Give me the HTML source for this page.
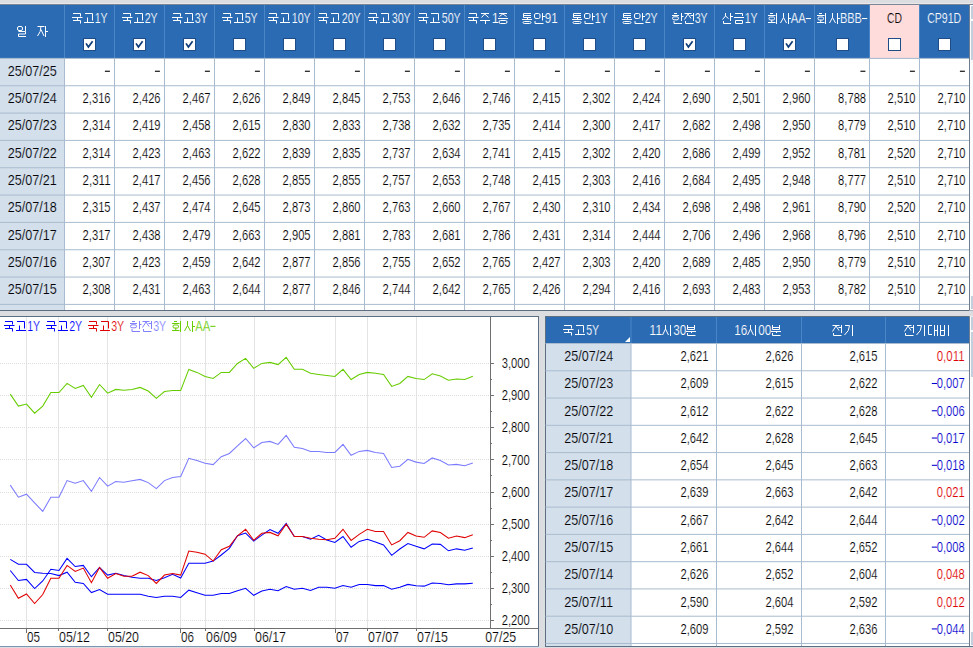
<!DOCTYPE html>
<html><head><meta charset="utf-8"><style>
html,body{margin:0;padding:0;width:973px;height:648px;overflow:hidden;background:#dcdde0}
svg{display:block}
text{font-family:"Liberation Sans",sans-serif}
</style></head><body>
<svg width="973" height="648" viewBox="0 0 973 648" font-family="Liberation Sans, sans-serif">
<rect x="0.00" y="0.00" width="973.00" height="648.00" fill="#dcdde0" />
<rect x="0.00" y="3.00" width="973.00" height="1.00" fill="#e9e9eb" />
<rect x="0.00" y="4.00" width="973.00" height="1.00" fill="#7a8696" />
<rect x="0.00" y="58.40" width="969.00" height="252.10" fill="#ffffff" />
<rect x="0.00" y="58.40" width="64.00" height="252.10" fill="#d3dfea" />
<rect x="0.00" y="5.00" width="969.00" height="53.40" fill="#2b6bb4" />
<rect x="869.00" y="5.00" width="50.00" height="53.40" fill="#ffdcdc" />
<rect x="64.00" y="5.00" width="1.00" height="53.40" fill="#4a86c6" />
<rect x="114.00" y="5.00" width="1.00" height="53.40" fill="#4a86c6" />
<rect x="164.00" y="5.00" width="1.00" height="53.40" fill="#4a86c6" />
<rect x="214.00" y="5.00" width="1.00" height="53.40" fill="#4a86c6" />
<rect x="264.00" y="5.00" width="1.00" height="53.40" fill="#4a86c6" />
<rect x="314.00" y="5.00" width="1.00" height="53.40" fill="#4a86c6" />
<rect x="364.00" y="5.00" width="1.00" height="53.40" fill="#4a86c6" />
<rect x="414.00" y="5.00" width="1.00" height="53.40" fill="#4a86c6" />
<rect x="464.00" y="5.00" width="1.00" height="53.40" fill="#4a86c6" />
<rect x="514.00" y="5.00" width="1.00" height="53.40" fill="#4a86c6" />
<rect x="564.00" y="5.00" width="1.00" height="53.40" fill="#4a86c6" />
<rect x="614.00" y="5.00" width="1.00" height="53.40" fill="#4a86c6" />
<rect x="664.00" y="5.00" width="1.00" height="53.40" fill="#4a86c6" />
<rect x="714.00" y="5.00" width="1.00" height="53.40" fill="#4a86c6" />
<rect x="764.00" y="5.00" width="1.00" height="53.40" fill="#4a86c6" />
<rect x="814.00" y="5.00" width="1.00" height="53.40" fill="#4a86c6" />
<rect x="869.00" y="5.00" width="1.00" height="53.40" fill="#4a86c6" />
<rect x="919.00" y="5.00" width="1.00" height="53.40" fill="#4a86c6" />
<rect x="0.00" y="57.90" width="969.00" height="1.00" fill="#a9bccf" />
<rect x="0.00" y="85.23" width="969.00" height="1.00" fill="#a9bccf" />
<rect x="0.00" y="112.57" width="969.00" height="1.00" fill="#a9bccf" />
<rect x="0.00" y="139.90" width="969.00" height="1.00" fill="#a9bccf" />
<rect x="0.00" y="167.23" width="969.00" height="1.00" fill="#a9bccf" />
<rect x="0.00" y="194.56" width="969.00" height="1.00" fill="#a9bccf" />
<rect x="0.00" y="221.90" width="969.00" height="1.00" fill="#a9bccf" />
<rect x="0.00" y="249.23" width="969.00" height="1.00" fill="#a9bccf" />
<rect x="0.00" y="276.56" width="969.00" height="1.00" fill="#a9bccf" />
<rect x="0.00" y="303.90" width="969.00" height="1.00" fill="#a9bccf" />
<rect x="64.00" y="58.40" width="1.00" height="252.10" fill="#a9bccf" />
<rect x="114.00" y="58.40" width="1.00" height="252.10" fill="#a9bccf" />
<rect x="164.00" y="58.40" width="1.00" height="252.10" fill="#a9bccf" />
<rect x="214.00" y="58.40" width="1.00" height="252.10" fill="#a9bccf" />
<rect x="264.00" y="58.40" width="1.00" height="252.10" fill="#a9bccf" />
<rect x="314.00" y="58.40" width="1.00" height="252.10" fill="#a9bccf" />
<rect x="364.00" y="58.40" width="1.00" height="252.10" fill="#a9bccf" />
<rect x="414.00" y="58.40" width="1.00" height="252.10" fill="#a9bccf" />
<rect x="464.00" y="58.40" width="1.00" height="252.10" fill="#a9bccf" />
<rect x="514.00" y="58.40" width="1.00" height="252.10" fill="#a9bccf" />
<rect x="564.00" y="58.40" width="1.00" height="252.10" fill="#a9bccf" />
<rect x="614.00" y="58.40" width="1.00" height="252.10" fill="#a9bccf" />
<rect x="664.00" y="58.40" width="1.00" height="252.10" fill="#a9bccf" />
<rect x="714.00" y="58.40" width="1.00" height="252.10" fill="#a9bccf" />
<rect x="764.00" y="58.40" width="1.00" height="252.10" fill="#a9bccf" />
<rect x="814.00" y="58.40" width="1.00" height="252.10" fill="#a9bccf" />
<rect x="869.00" y="58.40" width="1.00" height="252.10" fill="#a9bccf" />
<rect x="919.00" y="58.40" width="1.00" height="252.10" fill="#a9bccf" />
<rect x="969.00" y="58.40" width="1.00" height="252.10" fill="#a9bccf" />
<rect x="0.00" y="310.00" width="973.00" height="1.00" fill="#5f6f82" />
<path transform="translate(72,13) scale(1.0,1.0)" d="M1,0.5H8.5V3.5 M0,4.5H10.5 M5.5,4.5V7.5 M1,7.5H8.5V10.5" fill="none" stroke="#ffffff" stroke-width="1.00"/>
<path transform="translate(84,13) scale(1.0,1.0)" d="M1,0.5H8.5V7.5 M3.5,4.5V9.5 M0,9.5H10" fill="none" stroke="#ffffff" stroke-width="1.00"/>
<text x="94.70" y="23.40" font-size="14" fill="#ffffff" stroke="#2b6bb4" stroke-width="0.18" textLength="13.00" lengthAdjust="spacingAndGlyphs">1Y</text>
<rect x="83.00" y="38.00" width="13.00" height="13.00" fill="#1d4c86" />
<rect x="84.00" y="39.00" width="11.00" height="11.00" fill="#ffffff" />
<path d="M86,43.4 L88.4,47.0 L92.6,41.2" fill="none" stroke="#0d3b78" stroke-width="1.7"/>
<path transform="translate(122,13) scale(1.0,1.0)" d="M1,0.5H8.5V3.5 M0,4.5H10.5 M5.5,4.5V7.5 M1,7.5H8.5V10.5" fill="none" stroke="#ffffff" stroke-width="1.00"/>
<path transform="translate(134,13) scale(1.0,1.0)" d="M1,0.5H8.5V7.5 M3.5,4.5V9.5 M0,9.5H10" fill="none" stroke="#ffffff" stroke-width="1.00"/>
<text x="144.70" y="23.40" font-size="14" fill="#ffffff" stroke="#2b6bb4" stroke-width="0.18" textLength="13.00" lengthAdjust="spacingAndGlyphs">2Y</text>
<rect x="133.00" y="38.00" width="13.00" height="13.00" fill="#1d4c86" />
<rect x="134.00" y="39.00" width="11.00" height="11.00" fill="#ffffff" />
<path d="M136,43.4 L138.4,47.0 L142.6,41.2" fill="none" stroke="#0d3b78" stroke-width="1.7"/>
<path transform="translate(172,13) scale(1.0,1.0)" d="M1,0.5H8.5V3.5 M0,4.5H10.5 M5.5,4.5V7.5 M1,7.5H8.5V10.5" fill="none" stroke="#ffffff" stroke-width="1.00"/>
<path transform="translate(184,13) scale(1.0,1.0)" d="M1,0.5H8.5V7.5 M3.5,4.5V9.5 M0,9.5H10" fill="none" stroke="#ffffff" stroke-width="1.00"/>
<text x="194.70" y="23.40" font-size="14" fill="#ffffff" stroke="#2b6bb4" stroke-width="0.18" textLength="13.00" lengthAdjust="spacingAndGlyphs">3Y</text>
<rect x="183.00" y="38.00" width="13.00" height="13.00" fill="#1d4c86" />
<rect x="184.00" y="39.00" width="11.00" height="11.00" fill="#ffffff" />
<path d="M186,43.4 L188.4,47.0 L192.6,41.2" fill="none" stroke="#0d3b78" stroke-width="1.7"/>
<path transform="translate(222,13) scale(1.0,1.0)" d="M1,0.5H8.5V3.5 M0,4.5H10.5 M5.5,4.5V7.5 M1,7.5H8.5V10.5" fill="none" stroke="#ffffff" stroke-width="1.00"/>
<path transform="translate(234,13) scale(1.0,1.0)" d="M1,0.5H8.5V7.5 M3.5,4.5V9.5 M0,9.5H10" fill="none" stroke="#ffffff" stroke-width="1.00"/>
<text x="244.70" y="23.40" font-size="14" fill="#ffffff" stroke="#2b6bb4" stroke-width="0.18" textLength="13.00" lengthAdjust="spacingAndGlyphs">5Y</text>
<rect x="233.00" y="38.00" width="13.00" height="13.00" fill="#1d4c86" />
<rect x="234.00" y="39.00" width="11.00" height="11.00" fill="#ffffff" />
<path transform="translate(268,13) scale(1.0,1.0)" d="M1,0.5H8.5V3.5 M0,4.5H10.5 M5.5,4.5V7.5 M1,7.5H8.5V10.5" fill="none" stroke="#ffffff" stroke-width="1.00"/>
<path transform="translate(280,13) scale(1.0,1.0)" d="M1,0.5H8.5V7.5 M3.5,4.5V9.5 M0,9.5H10" fill="none" stroke="#ffffff" stroke-width="1.00"/>
<text x="291.70" y="23.40" font-size="14" fill="#ffffff" stroke="#2b6bb4" stroke-width="0.18" textLength="19.00" lengthAdjust="spacingAndGlyphs">10Y</text>
<rect x="283.00" y="38.00" width="13.00" height="13.00" fill="#1d4c86" />
<rect x="284.00" y="39.00" width="11.00" height="11.00" fill="#ffffff" />
<path transform="translate(318,13) scale(1.0,1.0)" d="M1,0.5H8.5V3.5 M0,4.5H10.5 M5.5,4.5V7.5 M1,7.5H8.5V10.5" fill="none" stroke="#ffffff" stroke-width="1.00"/>
<path transform="translate(330,13) scale(1.0,1.0)" d="M1,0.5H8.5V7.5 M3.5,4.5V9.5 M0,9.5H10" fill="none" stroke="#ffffff" stroke-width="1.00"/>
<text x="341.70" y="23.40" font-size="14" fill="#ffffff" stroke="#2b6bb4" stroke-width="0.18" textLength="19.00" lengthAdjust="spacingAndGlyphs">20Y</text>
<rect x="333.00" y="38.00" width="13.00" height="13.00" fill="#1d4c86" />
<rect x="334.00" y="39.00" width="11.00" height="11.00" fill="#ffffff" />
<path transform="translate(368,13) scale(1.0,1.0)" d="M1,0.5H8.5V3.5 M0,4.5H10.5 M5.5,4.5V7.5 M1,7.5H8.5V10.5" fill="none" stroke="#ffffff" stroke-width="1.00"/>
<path transform="translate(380,13) scale(1.0,1.0)" d="M1,0.5H8.5V7.5 M3.5,4.5V9.5 M0,9.5H10" fill="none" stroke="#ffffff" stroke-width="1.00"/>
<text x="391.70" y="23.40" font-size="14" fill="#ffffff" stroke="#2b6bb4" stroke-width="0.18" textLength="19.00" lengthAdjust="spacingAndGlyphs">30Y</text>
<rect x="383.00" y="38.00" width="13.00" height="13.00" fill="#1d4c86" />
<rect x="384.00" y="39.00" width="11.00" height="11.00" fill="#ffffff" />
<path transform="translate(418,13) scale(1.0,1.0)" d="M1,0.5H8.5V3.5 M0,4.5H10.5 M5.5,4.5V7.5 M1,7.5H8.5V10.5" fill="none" stroke="#ffffff" stroke-width="1.00"/>
<path transform="translate(430,13) scale(1.0,1.0)" d="M1,0.5H8.5V7.5 M3.5,4.5V9.5 M0,9.5H10" fill="none" stroke="#ffffff" stroke-width="1.00"/>
<text x="441.70" y="23.40" font-size="14" fill="#ffffff" stroke="#2b6bb4" stroke-width="0.18" textLength="19.00" lengthAdjust="spacingAndGlyphs">50Y</text>
<rect x="433.00" y="38.00" width="13.00" height="13.00" fill="#1d4c86" />
<rect x="434.00" y="39.00" width="11.00" height="11.00" fill="#ffffff" />
<path transform="translate(468,13) scale(1.0,1.0)" d="M1,0.5H8.5V3.5 M0,4.5H10.5 M5.5,4.5V7.5 M1,7.5H8.5V10.5" fill="none" stroke="#ffffff" stroke-width="1.00"/>
<path transform="translate(480,13) scale(1.0,1.0)" d="M1,0.5H9 M5,0.7L1.5,4.5 M5,1.2L8.5,4.5 M0,7.5H10 M5.5,7.5V11" fill="none" stroke="#ffffff" stroke-width="1.00"/>
<text x="491.70" y="23.40" font-size="14" fill="#ffffff" stroke="#2b6bb4" stroke-width="0.18" textLength="7.00" lengthAdjust="spacingAndGlyphs">1</text>
<path transform="translate(498,13) scale(1.0,1.0)" d="M1,0.5H9 M5,0.7L1.5,3.5 M5,1L8.5,3.5 M0,5.5H10 M2.5,7.5H7.5Q9,7.5 9,9Q9,10.5 7.5,10.5H2.5Q1,10.5 1,9Q1,7.5 2.5,7.5Z" fill="none" stroke="#ffffff" stroke-width="1.00"/>
<rect x="483.00" y="38.00" width="13.00" height="13.00" fill="#1d4c86" />
<rect x="484.00" y="39.00" width="11.00" height="11.00" fill="#ffffff" />
<path transform="translate(522,13) scale(1.0,1.0)" d="M9,0.5H1.5V4.5H9 M1.5,2.5H9 M5.5,4.5V6.5 M0,6.5H10 M2.5,8.5H7.5Q9,8.5 9,9.5Q9,10.5 7.5,10.5H2.5Q1,10.5 1,9.5Q1,8.5 2.5,8.5Z" fill="none" stroke="#ffffff" stroke-width="1.00"/>
<path transform="translate(534,13) scale(1.0,1.0)" d="M2,0.5H4.5Q6,0.5 6,2V4Q6,5.5 4.5,5.5H2Q0.5,5.5 0.5,4V2Q0.5,0.5 2,0.5Z M8.5,0V7.5 M8.5,3.5H11 M1,8V10.5H9.5" fill="none" stroke="#ffffff" stroke-width="1.00"/>
<text x="544.70" y="23.40" font-size="14" fill="#ffffff" stroke="#2b6bb4" stroke-width="0.18" textLength="13.00" lengthAdjust="spacingAndGlyphs">91</text>
<rect x="533.00" y="38.00" width="13.00" height="13.00" fill="#1d4c86" />
<rect x="534.00" y="39.00" width="11.00" height="11.00" fill="#ffffff" />
<path transform="translate(572,13) scale(1.0,1.0)" d="M9,0.5H1.5V4.5H9 M1.5,2.5H9 M5.5,4.5V6.5 M0,6.5H10 M2.5,8.5H7.5Q9,8.5 9,9.5Q9,10.5 7.5,10.5H2.5Q1,10.5 1,9.5Q1,8.5 2.5,8.5Z" fill="none" stroke="#ffffff" stroke-width="1.00"/>
<path transform="translate(584,13) scale(1.0,1.0)" d="M2,0.5H4.5Q6,0.5 6,2V4Q6,5.5 4.5,5.5H2Q0.5,5.5 0.5,4V2Q0.5,0.5 2,0.5Z M8.5,0V7.5 M8.5,3.5H11 M1,8V10.5H9.5" fill="none" stroke="#ffffff" stroke-width="1.00"/>
<text x="594.70" y="23.40" font-size="14" fill="#ffffff" stroke="#2b6bb4" stroke-width="0.18" textLength="13.00" lengthAdjust="spacingAndGlyphs">1Y</text>
<rect x="583.00" y="38.00" width="13.00" height="13.00" fill="#1d4c86" />
<rect x="584.00" y="39.00" width="11.00" height="11.00" fill="#ffffff" />
<path transform="translate(622,13) scale(1.0,1.0)" d="M9,0.5H1.5V4.5H9 M1.5,2.5H9 M5.5,4.5V6.5 M0,6.5H10 M2.5,8.5H7.5Q9,8.5 9,9.5Q9,10.5 7.5,10.5H2.5Q1,10.5 1,9.5Q1,8.5 2.5,8.5Z" fill="none" stroke="#ffffff" stroke-width="1.00"/>
<path transform="translate(634,13) scale(1.0,1.0)" d="M2,0.5H4.5Q6,0.5 6,2V4Q6,5.5 4.5,5.5H2Q0.5,5.5 0.5,4V2Q0.5,0.5 2,0.5Z M8.5,0V7.5 M8.5,3.5H11 M1,8V10.5H9.5" fill="none" stroke="#ffffff" stroke-width="1.00"/>
<text x="644.70" y="23.40" font-size="14" fill="#ffffff" stroke="#2b6bb4" stroke-width="0.18" textLength="13.00" lengthAdjust="spacingAndGlyphs">2Y</text>
<rect x="633.00" y="38.00" width="13.00" height="13.00" fill="#1d4c86" />
<rect x="634.00" y="39.00" width="11.00" height="11.00" fill="#ffffff" />
<path transform="translate(672,13) scale(1.0,1.0)" d="M2,0.5H5 M0,2.5H7 M2,3.8H5Q6.5,3.8 6.5,5.3Q6.5,6.8 5,6.8H2Q0.5,6.8 0.5,5.3Q0.5,3.8 2,3.8Z M9.5,0V8 M9.5,3.5H11.5 M2,8V10.5H10" fill="none" stroke="#ffffff" stroke-width="1.00"/>
<path transform="translate(684,13) scale(1.0,1.0)" d="M0.5,0.5H7.5 M4,1L0.5,6.5 M4,1L7,5.5 M6.5,2.5H9.5 M9.5,0V8 M1.5,8V10.5H9.5" fill="none" stroke="#ffffff" stroke-width="1.00"/>
<text x="694.70" y="23.40" font-size="14" fill="#ffffff" stroke="#2b6bb4" stroke-width="0.18" textLength="13.00" lengthAdjust="spacingAndGlyphs">3Y</text>
<rect x="683.00" y="38.00" width="13.00" height="13.00" fill="#1d4c86" />
<rect x="684.00" y="39.00" width="11.00" height="11.00" fill="#ffffff" />
<path d="M686,43.4 L688.4,47.0 L692.6,41.2" fill="none" stroke="#0d3b78" stroke-width="1.7"/>
<path transform="translate(722,13) scale(1.0,1.0)" d="M3.5,0V3L0.5,6.5 M3.5,3L6.5,5.5 M8.5,0V8 M8.5,3.5H11 M1.5,8V10.5H9" fill="none" stroke="#ffffff" stroke-width="1.00"/>
<path transform="translate(734,13) scale(1.0,1.0)" d="M1,0.5H8.5V3 M0,4.5H10 M1.5,7.5H8.5V10.5H1.5Z" fill="none" stroke="#ffffff" stroke-width="1.00"/>
<text x="744.70" y="23.40" font-size="14" fill="#ffffff" stroke="#2b6bb4" stroke-width="0.18" textLength="13.00" lengthAdjust="spacingAndGlyphs">1Y</text>
<rect x="733.00" y="38.00" width="13.00" height="13.00" fill="#1d4c86" />
<rect x="734.00" y="39.00" width="11.00" height="11.00" fill="#ffffff" />
<path transform="translate(768,13) scale(1.0,1.0)" d="M2,0.5H5 M0,2.5H7.5 M2,4H5.5Q6.5,4 6.5,5.5Q6.5,7 5.5,7H2Q1,7 1,5.5Q1,4 2,4Z M3.75,7V9.5 M0,9.5H7.5 M8.5,0V11" fill="none" stroke="#ffffff" stroke-width="1.00"/>
<path transform="translate(780,13) scale(1.0,1.0)" d="M3.5,0V4.5L0.5,10 M3.5,4.5L6.5,10 M8.5,0V11 M8.5,5.5H11" fill="none" stroke="#ffffff" stroke-width="1.00"/>
<text x="790.70" y="23.40" font-size="14" fill="#ffffff" stroke="#2b6bb4" stroke-width="0.18" textLength="15.00" lengthAdjust="spacingAndGlyphs">AA</text>
<rect x="805.80" y="18.00" width="5.2" height="1.05" fill="#ffffff"/>
<rect x="783.00" y="38.00" width="13.00" height="13.00" fill="#1d4c86" />
<rect x="784.00" y="39.00" width="11.00" height="11.00" fill="#ffffff" />
<path d="M786,43.4 L788.4,47.0 L792.6,41.2" fill="none" stroke="#0d3b78" stroke-width="1.7"/>
<path transform="translate(817,13) scale(1.0,1.0)" d="M2,0.5H5 M0,2.5H7.5 M2,4H5.5Q6.5,4 6.5,5.5Q6.5,7 5.5,7H2Q1,7 1,5.5Q1,4 2,4Z M3.75,7V9.5 M0,9.5H7.5 M8.5,0V11" fill="none" stroke="#ffffff" stroke-width="1.00"/>
<path transform="translate(829,13) scale(1.0,1.0)" d="M3.5,0V4.5L0.5,10 M3.5,4.5L6.5,10 M8.5,0V11 M8.5,5.5H11" fill="none" stroke="#ffffff" stroke-width="1.00"/>
<text x="839.95" y="23.40" font-size="14" fill="#ffffff" stroke="#2b6bb4" stroke-width="0.18" textLength="22.00" lengthAdjust="spacingAndGlyphs">BBB</text>
<rect x="862.05" y="18.00" width="5.2" height="1.05" fill="#ffffff"/>
<rect x="836.00" y="38.00" width="13.00" height="13.00" fill="#1d4c86" />
<rect x="837.00" y="39.00" width="11.00" height="11.00" fill="#ffffff" />
<text x="886.95" y="23.40" font-size="14" fill="#000000" stroke="#ffdcdc" stroke-width="0.18" textLength="15.00" lengthAdjust="spacingAndGlyphs">CD</text>
<rect x="888.00" y="38.00" width="13.00" height="13.00" fill="#1d4c86" />
<rect x="889.00" y="39.00" width="11.00" height="11.00" fill="#ffffff" />
<text x="927.20" y="23.40" font-size="14" fill="#ffffff" stroke="#2b6bb4" stroke-width="0.18" textLength="34.00" lengthAdjust="spacingAndGlyphs">CP91D</text>
<rect x="938.00" y="38.00" width="13.00" height="13.00" fill="#1d4c86" />
<rect x="939.00" y="39.00" width="11.00" height="11.00" fill="#ffffff" />
<path transform="translate(17,26) scale(1.0,1.0)" d="M2,0.5H4Q5.5,0.5 5.5,2V3Q5.5,4.5 4,4.5H2Q0.5,4.5 0.5,3V2Q0.5,0.5 2,0.5Z M8.5,0V5.5 M1.5,5.5H8.5V8H1.5V10.5H9" fill="none" stroke="#ffffff" stroke-width="1.00"/>
<path transform="translate(37,26) scale(1.0,1.0)" d="M0.5,0.5H7.5 M4,0.5Q4,6 0.5,10 M4,3.5L7,10 M8.5,0V11 M8.5,5.5H11" fill="none" stroke="#ffffff" stroke-width="1.00"/>
<text x="7.80" y="75.70" font-size="14" fill="#000000" stroke="#d3dfea" stroke-width="0.18" textLength="49.00" lengthAdjust="spacingAndGlyphs">25/07/25</text>
<rect x="104.90" y="70.70" width="5" height="1.1" fill="#000"/>
<rect x="154.90" y="70.70" width="5" height="1.1" fill="#000"/>
<rect x="204.90" y="70.70" width="5" height="1.1" fill="#000"/>
<rect x="254.90" y="70.70" width="5" height="1.1" fill="#000"/>
<rect x="304.90" y="70.70" width="5" height="1.1" fill="#000"/>
<rect x="354.90" y="70.70" width="5" height="1.1" fill="#000"/>
<rect x="404.90" y="70.70" width="5" height="1.1" fill="#000"/>
<rect x="454.90" y="70.70" width="5" height="1.1" fill="#000"/>
<rect x="504.90" y="70.70" width="5" height="1.1" fill="#000"/>
<rect x="554.90" y="70.70" width="5" height="1.1" fill="#000"/>
<rect x="604.90" y="70.70" width="5" height="1.1" fill="#000"/>
<rect x="654.90" y="70.70" width="5" height="1.1" fill="#000"/>
<rect x="704.90" y="70.70" width="5" height="1.1" fill="#000"/>
<rect x="754.90" y="70.70" width="5" height="1.1" fill="#000"/>
<rect x="804.90" y="70.70" width="5" height="1.1" fill="#000"/>
<rect x="860.40" y="70.70" width="5" height="1.1" fill="#000"/>
<rect x="909.90" y="70.70" width="5" height="1.1" fill="#000"/>
<rect x="959.90" y="70.70" width="5" height="1.1" fill="#000"/>
<text x="7.80" y="103.03" font-size="14" fill="#000000" stroke="#d3dfea" stroke-width="0.18" textLength="49.00" lengthAdjust="spacingAndGlyphs">25/07/24</text>
<text x="82.60" y="103.03" font-size="14" fill="#000000" stroke="#ffffff" stroke-width="0.18" textLength="28.00" lengthAdjust="spacingAndGlyphs">2,316</text>
<text x="132.60" y="103.03" font-size="14" fill="#000000" stroke="#ffffff" stroke-width="0.18" textLength="28.00" lengthAdjust="spacingAndGlyphs">2,426</text>
<text x="182.60" y="103.03" font-size="14" fill="#000000" stroke="#ffffff" stroke-width="0.18" textLength="28.00" lengthAdjust="spacingAndGlyphs">2,467</text>
<text x="232.60" y="103.03" font-size="14" fill="#000000" stroke="#ffffff" stroke-width="0.18" textLength="28.00" lengthAdjust="spacingAndGlyphs">2,626</text>
<text x="282.60" y="103.03" font-size="14" fill="#000000" stroke="#ffffff" stroke-width="0.18" textLength="28.00" lengthAdjust="spacingAndGlyphs">2,849</text>
<text x="332.60" y="103.03" font-size="14" fill="#000000" stroke="#ffffff" stroke-width="0.18" textLength="28.00" lengthAdjust="spacingAndGlyphs">2,845</text>
<text x="382.60" y="103.03" font-size="14" fill="#000000" stroke="#ffffff" stroke-width="0.18" textLength="28.00" lengthAdjust="spacingAndGlyphs">2,753</text>
<text x="432.60" y="103.03" font-size="14" fill="#000000" stroke="#ffffff" stroke-width="0.18" textLength="28.00" lengthAdjust="spacingAndGlyphs">2,646</text>
<text x="482.60" y="103.03" font-size="14" fill="#000000" stroke="#ffffff" stroke-width="0.18" textLength="28.00" lengthAdjust="spacingAndGlyphs">2,746</text>
<text x="532.60" y="103.03" font-size="14" fill="#000000" stroke="#ffffff" stroke-width="0.18" textLength="28.00" lengthAdjust="spacingAndGlyphs">2,415</text>
<text x="582.60" y="103.03" font-size="14" fill="#000000" stroke="#ffffff" stroke-width="0.18" textLength="28.00" lengthAdjust="spacingAndGlyphs">2,302</text>
<text x="632.60" y="103.03" font-size="14" fill="#000000" stroke="#ffffff" stroke-width="0.18" textLength="28.00" lengthAdjust="spacingAndGlyphs">2,424</text>
<text x="682.60" y="103.03" font-size="14" fill="#000000" stroke="#ffffff" stroke-width="0.18" textLength="28.00" lengthAdjust="spacingAndGlyphs">2,690</text>
<text x="732.60" y="103.03" font-size="14" fill="#000000" stroke="#ffffff" stroke-width="0.18" textLength="28.00" lengthAdjust="spacingAndGlyphs">2,501</text>
<text x="782.60" y="103.03" font-size="14" fill="#000000" stroke="#ffffff" stroke-width="0.18" textLength="28.00" lengthAdjust="spacingAndGlyphs">2,960</text>
<text x="838.10" y="103.03" font-size="14" fill="#000000" stroke="#ffffff" stroke-width="0.18" textLength="28.00" lengthAdjust="spacingAndGlyphs">8,788</text>
<text x="887.60" y="103.03" font-size="14" fill="#000000" stroke="#ffffff" stroke-width="0.18" textLength="28.00" lengthAdjust="spacingAndGlyphs">2,510</text>
<text x="937.60" y="103.03" font-size="14" fill="#000000" stroke="#ffffff" stroke-width="0.18" textLength="28.00" lengthAdjust="spacingAndGlyphs">2,710</text>
<text x="7.80" y="130.37" font-size="14" fill="#000000" stroke="#d3dfea" stroke-width="0.18" textLength="49.00" lengthAdjust="spacingAndGlyphs">25/07/23</text>
<text x="82.60" y="130.37" font-size="14" fill="#000000" stroke="#ffffff" stroke-width="0.18" textLength="28.00" lengthAdjust="spacingAndGlyphs">2,314</text>
<text x="132.60" y="130.37" font-size="14" fill="#000000" stroke="#ffffff" stroke-width="0.18" textLength="28.00" lengthAdjust="spacingAndGlyphs">2,419</text>
<text x="182.60" y="130.37" font-size="14" fill="#000000" stroke="#ffffff" stroke-width="0.18" textLength="28.00" lengthAdjust="spacingAndGlyphs">2,458</text>
<text x="232.60" y="130.37" font-size="14" fill="#000000" stroke="#ffffff" stroke-width="0.18" textLength="28.00" lengthAdjust="spacingAndGlyphs">2,615</text>
<text x="282.60" y="130.37" font-size="14" fill="#000000" stroke="#ffffff" stroke-width="0.18" textLength="28.00" lengthAdjust="spacingAndGlyphs">2,830</text>
<text x="332.60" y="130.37" font-size="14" fill="#000000" stroke="#ffffff" stroke-width="0.18" textLength="28.00" lengthAdjust="spacingAndGlyphs">2,833</text>
<text x="382.60" y="130.37" font-size="14" fill="#000000" stroke="#ffffff" stroke-width="0.18" textLength="28.00" lengthAdjust="spacingAndGlyphs">2,738</text>
<text x="432.60" y="130.37" font-size="14" fill="#000000" stroke="#ffffff" stroke-width="0.18" textLength="28.00" lengthAdjust="spacingAndGlyphs">2,632</text>
<text x="482.60" y="130.37" font-size="14" fill="#000000" stroke="#ffffff" stroke-width="0.18" textLength="28.00" lengthAdjust="spacingAndGlyphs">2,735</text>
<text x="532.60" y="130.37" font-size="14" fill="#000000" stroke="#ffffff" stroke-width="0.18" textLength="28.00" lengthAdjust="spacingAndGlyphs">2,414</text>
<text x="582.60" y="130.37" font-size="14" fill="#000000" stroke="#ffffff" stroke-width="0.18" textLength="28.00" lengthAdjust="spacingAndGlyphs">2,300</text>
<text x="632.60" y="130.37" font-size="14" fill="#000000" stroke="#ffffff" stroke-width="0.18" textLength="28.00" lengthAdjust="spacingAndGlyphs">2,417</text>
<text x="682.60" y="130.37" font-size="14" fill="#000000" stroke="#ffffff" stroke-width="0.18" textLength="28.00" lengthAdjust="spacingAndGlyphs">2,682</text>
<text x="732.60" y="130.37" font-size="14" fill="#000000" stroke="#ffffff" stroke-width="0.18" textLength="28.00" lengthAdjust="spacingAndGlyphs">2,498</text>
<text x="782.60" y="130.37" font-size="14" fill="#000000" stroke="#ffffff" stroke-width="0.18" textLength="28.00" lengthAdjust="spacingAndGlyphs">2,950</text>
<text x="838.10" y="130.37" font-size="14" fill="#000000" stroke="#ffffff" stroke-width="0.18" textLength="28.00" lengthAdjust="spacingAndGlyphs">8,779</text>
<text x="887.60" y="130.37" font-size="14" fill="#000000" stroke="#ffffff" stroke-width="0.18" textLength="28.00" lengthAdjust="spacingAndGlyphs">2,510</text>
<text x="937.60" y="130.37" font-size="14" fill="#000000" stroke="#ffffff" stroke-width="0.18" textLength="28.00" lengthAdjust="spacingAndGlyphs">2,710</text>
<text x="7.80" y="157.70" font-size="14" fill="#000000" stroke="#d3dfea" stroke-width="0.18" textLength="49.00" lengthAdjust="spacingAndGlyphs">25/07/22</text>
<text x="82.60" y="157.70" font-size="14" fill="#000000" stroke="#ffffff" stroke-width="0.18" textLength="28.00" lengthAdjust="spacingAndGlyphs">2,314</text>
<text x="132.60" y="157.70" font-size="14" fill="#000000" stroke="#ffffff" stroke-width="0.18" textLength="28.00" lengthAdjust="spacingAndGlyphs">2,423</text>
<text x="182.60" y="157.70" font-size="14" fill="#000000" stroke="#ffffff" stroke-width="0.18" textLength="28.00" lengthAdjust="spacingAndGlyphs">2,463</text>
<text x="232.60" y="157.70" font-size="14" fill="#000000" stroke="#ffffff" stroke-width="0.18" textLength="28.00" lengthAdjust="spacingAndGlyphs">2,622</text>
<text x="282.60" y="157.70" font-size="14" fill="#000000" stroke="#ffffff" stroke-width="0.18" textLength="28.00" lengthAdjust="spacingAndGlyphs">2,839</text>
<text x="332.60" y="157.70" font-size="14" fill="#000000" stroke="#ffffff" stroke-width="0.18" textLength="28.00" lengthAdjust="spacingAndGlyphs">2,835</text>
<text x="382.60" y="157.70" font-size="14" fill="#000000" stroke="#ffffff" stroke-width="0.18" textLength="28.00" lengthAdjust="spacingAndGlyphs">2,737</text>
<text x="432.60" y="157.70" font-size="14" fill="#000000" stroke="#ffffff" stroke-width="0.18" textLength="28.00" lengthAdjust="spacingAndGlyphs">2,634</text>
<text x="482.60" y="157.70" font-size="14" fill="#000000" stroke="#ffffff" stroke-width="0.18" textLength="28.00" lengthAdjust="spacingAndGlyphs">2,741</text>
<text x="532.60" y="157.70" font-size="14" fill="#000000" stroke="#ffffff" stroke-width="0.18" textLength="28.00" lengthAdjust="spacingAndGlyphs">2,415</text>
<text x="582.60" y="157.70" font-size="14" fill="#000000" stroke="#ffffff" stroke-width="0.18" textLength="28.00" lengthAdjust="spacingAndGlyphs">2,302</text>
<text x="632.60" y="157.70" font-size="14" fill="#000000" stroke="#ffffff" stroke-width="0.18" textLength="28.00" lengthAdjust="spacingAndGlyphs">2,420</text>
<text x="682.60" y="157.70" font-size="14" fill="#000000" stroke="#ffffff" stroke-width="0.18" textLength="28.00" lengthAdjust="spacingAndGlyphs">2,686</text>
<text x="732.60" y="157.70" font-size="14" fill="#000000" stroke="#ffffff" stroke-width="0.18" textLength="28.00" lengthAdjust="spacingAndGlyphs">2,499</text>
<text x="782.60" y="157.70" font-size="14" fill="#000000" stroke="#ffffff" stroke-width="0.18" textLength="28.00" lengthAdjust="spacingAndGlyphs">2,952</text>
<text x="838.10" y="157.70" font-size="14" fill="#000000" stroke="#ffffff" stroke-width="0.18" textLength="28.00" lengthAdjust="spacingAndGlyphs">8,781</text>
<text x="887.60" y="157.70" font-size="14" fill="#000000" stroke="#ffffff" stroke-width="0.18" textLength="28.00" lengthAdjust="spacingAndGlyphs">2,520</text>
<text x="937.60" y="157.70" font-size="14" fill="#000000" stroke="#ffffff" stroke-width="0.18" textLength="28.00" lengthAdjust="spacingAndGlyphs">2,710</text>
<text x="7.80" y="185.03" font-size="14" fill="#000000" stroke="#d3dfea" stroke-width="0.18" textLength="49.00" lengthAdjust="spacingAndGlyphs">25/07/21</text>
<text x="82.60" y="185.03" font-size="14" fill="#000000" stroke="#ffffff" stroke-width="0.18" textLength="28.00" lengthAdjust="spacingAndGlyphs">2,311</text>
<text x="132.60" y="185.03" font-size="14" fill="#000000" stroke="#ffffff" stroke-width="0.18" textLength="28.00" lengthAdjust="spacingAndGlyphs">2,417</text>
<text x="182.60" y="185.03" font-size="14" fill="#000000" stroke="#ffffff" stroke-width="0.18" textLength="28.00" lengthAdjust="spacingAndGlyphs">2,456</text>
<text x="232.60" y="185.03" font-size="14" fill="#000000" stroke="#ffffff" stroke-width="0.18" textLength="28.00" lengthAdjust="spacingAndGlyphs">2,628</text>
<text x="282.60" y="185.03" font-size="14" fill="#000000" stroke="#ffffff" stroke-width="0.18" textLength="28.00" lengthAdjust="spacingAndGlyphs">2,855</text>
<text x="332.60" y="185.03" font-size="14" fill="#000000" stroke="#ffffff" stroke-width="0.18" textLength="28.00" lengthAdjust="spacingAndGlyphs">2,855</text>
<text x="382.60" y="185.03" font-size="14" fill="#000000" stroke="#ffffff" stroke-width="0.18" textLength="28.00" lengthAdjust="spacingAndGlyphs">2,757</text>
<text x="432.60" y="185.03" font-size="14" fill="#000000" stroke="#ffffff" stroke-width="0.18" textLength="28.00" lengthAdjust="spacingAndGlyphs">2,653</text>
<text x="482.60" y="185.03" font-size="14" fill="#000000" stroke="#ffffff" stroke-width="0.18" textLength="28.00" lengthAdjust="spacingAndGlyphs">2,748</text>
<text x="532.60" y="185.03" font-size="14" fill="#000000" stroke="#ffffff" stroke-width="0.18" textLength="28.00" lengthAdjust="spacingAndGlyphs">2,415</text>
<text x="582.60" y="185.03" font-size="14" fill="#000000" stroke="#ffffff" stroke-width="0.18" textLength="28.00" lengthAdjust="spacingAndGlyphs">2,303</text>
<text x="632.60" y="185.03" font-size="14" fill="#000000" stroke="#ffffff" stroke-width="0.18" textLength="28.00" lengthAdjust="spacingAndGlyphs">2,416</text>
<text x="682.60" y="185.03" font-size="14" fill="#000000" stroke="#ffffff" stroke-width="0.18" textLength="28.00" lengthAdjust="spacingAndGlyphs">2,684</text>
<text x="732.60" y="185.03" font-size="14" fill="#000000" stroke="#ffffff" stroke-width="0.18" textLength="28.00" lengthAdjust="spacingAndGlyphs">2,495</text>
<text x="782.60" y="185.03" font-size="14" fill="#000000" stroke="#ffffff" stroke-width="0.18" textLength="28.00" lengthAdjust="spacingAndGlyphs">2,948</text>
<text x="838.10" y="185.03" font-size="14" fill="#000000" stroke="#ffffff" stroke-width="0.18" textLength="28.00" lengthAdjust="spacingAndGlyphs">8,777</text>
<text x="887.60" y="185.03" font-size="14" fill="#000000" stroke="#ffffff" stroke-width="0.18" textLength="28.00" lengthAdjust="spacingAndGlyphs">2,510</text>
<text x="937.60" y="185.03" font-size="14" fill="#000000" stroke="#ffffff" stroke-width="0.18" textLength="28.00" lengthAdjust="spacingAndGlyphs">2,710</text>
<text x="7.80" y="212.37" font-size="14" fill="#000000" stroke="#d3dfea" stroke-width="0.18" textLength="49.00" lengthAdjust="spacingAndGlyphs">25/07/18</text>
<text x="82.60" y="212.37" font-size="14" fill="#000000" stroke="#ffffff" stroke-width="0.18" textLength="28.00" lengthAdjust="spacingAndGlyphs">2,315</text>
<text x="132.60" y="212.37" font-size="14" fill="#000000" stroke="#ffffff" stroke-width="0.18" textLength="28.00" lengthAdjust="spacingAndGlyphs">2,437</text>
<text x="182.60" y="212.37" font-size="14" fill="#000000" stroke="#ffffff" stroke-width="0.18" textLength="28.00" lengthAdjust="spacingAndGlyphs">2,474</text>
<text x="232.60" y="212.37" font-size="14" fill="#000000" stroke="#ffffff" stroke-width="0.18" textLength="28.00" lengthAdjust="spacingAndGlyphs">2,645</text>
<text x="282.60" y="212.37" font-size="14" fill="#000000" stroke="#ffffff" stroke-width="0.18" textLength="28.00" lengthAdjust="spacingAndGlyphs">2,873</text>
<text x="332.60" y="212.37" font-size="14" fill="#000000" stroke="#ffffff" stroke-width="0.18" textLength="28.00" lengthAdjust="spacingAndGlyphs">2,860</text>
<text x="382.60" y="212.37" font-size="14" fill="#000000" stroke="#ffffff" stroke-width="0.18" textLength="28.00" lengthAdjust="spacingAndGlyphs">2,763</text>
<text x="432.60" y="212.37" font-size="14" fill="#000000" stroke="#ffffff" stroke-width="0.18" textLength="28.00" lengthAdjust="spacingAndGlyphs">2,660</text>
<text x="482.60" y="212.37" font-size="14" fill="#000000" stroke="#ffffff" stroke-width="0.18" textLength="28.00" lengthAdjust="spacingAndGlyphs">2,767</text>
<text x="532.60" y="212.37" font-size="14" fill="#000000" stroke="#ffffff" stroke-width="0.18" textLength="28.00" lengthAdjust="spacingAndGlyphs">2,430</text>
<text x="582.60" y="212.37" font-size="14" fill="#000000" stroke="#ffffff" stroke-width="0.18" textLength="28.00" lengthAdjust="spacingAndGlyphs">2,310</text>
<text x="632.60" y="212.37" font-size="14" fill="#000000" stroke="#ffffff" stroke-width="0.18" textLength="28.00" lengthAdjust="spacingAndGlyphs">2,434</text>
<text x="682.60" y="212.37" font-size="14" fill="#000000" stroke="#ffffff" stroke-width="0.18" textLength="28.00" lengthAdjust="spacingAndGlyphs">2,698</text>
<text x="732.60" y="212.37" font-size="14" fill="#000000" stroke="#ffffff" stroke-width="0.18" textLength="28.00" lengthAdjust="spacingAndGlyphs">2,498</text>
<text x="782.60" y="212.37" font-size="14" fill="#000000" stroke="#ffffff" stroke-width="0.18" textLength="28.00" lengthAdjust="spacingAndGlyphs">2,961</text>
<text x="838.10" y="212.37" font-size="14" fill="#000000" stroke="#ffffff" stroke-width="0.18" textLength="28.00" lengthAdjust="spacingAndGlyphs">8,790</text>
<text x="887.60" y="212.37" font-size="14" fill="#000000" stroke="#ffffff" stroke-width="0.18" textLength="28.00" lengthAdjust="spacingAndGlyphs">2,520</text>
<text x="937.60" y="212.37" font-size="14" fill="#000000" stroke="#ffffff" stroke-width="0.18" textLength="28.00" lengthAdjust="spacingAndGlyphs">2,710</text>
<text x="7.80" y="239.70" font-size="14" fill="#000000" stroke="#d3dfea" stroke-width="0.18" textLength="49.00" lengthAdjust="spacingAndGlyphs">25/07/17</text>
<text x="82.60" y="239.70" font-size="14" fill="#000000" stroke="#ffffff" stroke-width="0.18" textLength="28.00" lengthAdjust="spacingAndGlyphs">2,317</text>
<text x="132.60" y="239.70" font-size="14" fill="#000000" stroke="#ffffff" stroke-width="0.18" textLength="28.00" lengthAdjust="spacingAndGlyphs">2,438</text>
<text x="182.60" y="239.70" font-size="14" fill="#000000" stroke="#ffffff" stroke-width="0.18" textLength="28.00" lengthAdjust="spacingAndGlyphs">2,479</text>
<text x="232.60" y="239.70" font-size="14" fill="#000000" stroke="#ffffff" stroke-width="0.18" textLength="28.00" lengthAdjust="spacingAndGlyphs">2,663</text>
<text x="282.60" y="239.70" font-size="14" fill="#000000" stroke="#ffffff" stroke-width="0.18" textLength="28.00" lengthAdjust="spacingAndGlyphs">2,905</text>
<text x="332.60" y="239.70" font-size="14" fill="#000000" stroke="#ffffff" stroke-width="0.18" textLength="28.00" lengthAdjust="spacingAndGlyphs">2,881</text>
<text x="382.60" y="239.70" font-size="14" fill="#000000" stroke="#ffffff" stroke-width="0.18" textLength="28.00" lengthAdjust="spacingAndGlyphs">2,783</text>
<text x="432.60" y="239.70" font-size="14" fill="#000000" stroke="#ffffff" stroke-width="0.18" textLength="28.00" lengthAdjust="spacingAndGlyphs">2,681</text>
<text x="482.60" y="239.70" font-size="14" fill="#000000" stroke="#ffffff" stroke-width="0.18" textLength="28.00" lengthAdjust="spacingAndGlyphs">2,786</text>
<text x="532.60" y="239.70" font-size="14" fill="#000000" stroke="#ffffff" stroke-width="0.18" textLength="28.00" lengthAdjust="spacingAndGlyphs">2,431</text>
<text x="582.60" y="239.70" font-size="14" fill="#000000" stroke="#ffffff" stroke-width="0.18" textLength="28.00" lengthAdjust="spacingAndGlyphs">2,314</text>
<text x="632.60" y="239.70" font-size="14" fill="#000000" stroke="#ffffff" stroke-width="0.18" textLength="28.00" lengthAdjust="spacingAndGlyphs">2,444</text>
<text x="682.60" y="239.70" font-size="14" fill="#000000" stroke="#ffffff" stroke-width="0.18" textLength="28.00" lengthAdjust="spacingAndGlyphs">2,706</text>
<text x="732.60" y="239.70" font-size="14" fill="#000000" stroke="#ffffff" stroke-width="0.18" textLength="28.00" lengthAdjust="spacingAndGlyphs">2,496</text>
<text x="782.60" y="239.70" font-size="14" fill="#000000" stroke="#ffffff" stroke-width="0.18" textLength="28.00" lengthAdjust="spacingAndGlyphs">2,968</text>
<text x="838.10" y="239.70" font-size="14" fill="#000000" stroke="#ffffff" stroke-width="0.18" textLength="28.00" lengthAdjust="spacingAndGlyphs">8,796</text>
<text x="887.60" y="239.70" font-size="14" fill="#000000" stroke="#ffffff" stroke-width="0.18" textLength="28.00" lengthAdjust="spacingAndGlyphs">2,510</text>
<text x="937.60" y="239.70" font-size="14" fill="#000000" stroke="#ffffff" stroke-width="0.18" textLength="28.00" lengthAdjust="spacingAndGlyphs">2,710</text>
<text x="7.80" y="267.03" font-size="14" fill="#000000" stroke="#d3dfea" stroke-width="0.18" textLength="49.00" lengthAdjust="spacingAndGlyphs">25/07/16</text>
<text x="82.60" y="267.03" font-size="14" fill="#000000" stroke="#ffffff" stroke-width="0.18" textLength="28.00" lengthAdjust="spacingAndGlyphs">2,307</text>
<text x="132.60" y="267.03" font-size="14" fill="#000000" stroke="#ffffff" stroke-width="0.18" textLength="28.00" lengthAdjust="spacingAndGlyphs">2,423</text>
<text x="182.60" y="267.03" font-size="14" fill="#000000" stroke="#ffffff" stroke-width="0.18" textLength="28.00" lengthAdjust="spacingAndGlyphs">2,459</text>
<text x="232.60" y="267.03" font-size="14" fill="#000000" stroke="#ffffff" stroke-width="0.18" textLength="28.00" lengthAdjust="spacingAndGlyphs">2,642</text>
<text x="282.60" y="267.03" font-size="14" fill="#000000" stroke="#ffffff" stroke-width="0.18" textLength="28.00" lengthAdjust="spacingAndGlyphs">2,877</text>
<text x="332.60" y="267.03" font-size="14" fill="#000000" stroke="#ffffff" stroke-width="0.18" textLength="28.00" lengthAdjust="spacingAndGlyphs">2,856</text>
<text x="382.60" y="267.03" font-size="14" fill="#000000" stroke="#ffffff" stroke-width="0.18" textLength="28.00" lengthAdjust="spacingAndGlyphs">2,755</text>
<text x="432.60" y="267.03" font-size="14" fill="#000000" stroke="#ffffff" stroke-width="0.18" textLength="28.00" lengthAdjust="spacingAndGlyphs">2,652</text>
<text x="482.60" y="267.03" font-size="14" fill="#000000" stroke="#ffffff" stroke-width="0.18" textLength="28.00" lengthAdjust="spacingAndGlyphs">2,765</text>
<text x="532.60" y="267.03" font-size="14" fill="#000000" stroke="#ffffff" stroke-width="0.18" textLength="28.00" lengthAdjust="spacingAndGlyphs">2,427</text>
<text x="582.60" y="267.03" font-size="14" fill="#000000" stroke="#ffffff" stroke-width="0.18" textLength="28.00" lengthAdjust="spacingAndGlyphs">2,303</text>
<text x="632.60" y="267.03" font-size="14" fill="#000000" stroke="#ffffff" stroke-width="0.18" textLength="28.00" lengthAdjust="spacingAndGlyphs">2,420</text>
<text x="682.60" y="267.03" font-size="14" fill="#000000" stroke="#ffffff" stroke-width="0.18" textLength="28.00" lengthAdjust="spacingAndGlyphs">2,689</text>
<text x="732.60" y="267.03" font-size="14" fill="#000000" stroke="#ffffff" stroke-width="0.18" textLength="28.00" lengthAdjust="spacingAndGlyphs">2,485</text>
<text x="782.60" y="267.03" font-size="14" fill="#000000" stroke="#ffffff" stroke-width="0.18" textLength="28.00" lengthAdjust="spacingAndGlyphs">2,950</text>
<text x="838.10" y="267.03" font-size="14" fill="#000000" stroke="#ffffff" stroke-width="0.18" textLength="28.00" lengthAdjust="spacingAndGlyphs">8,779</text>
<text x="887.60" y="267.03" font-size="14" fill="#000000" stroke="#ffffff" stroke-width="0.18" textLength="28.00" lengthAdjust="spacingAndGlyphs">2,510</text>
<text x="937.60" y="267.03" font-size="14" fill="#000000" stroke="#ffffff" stroke-width="0.18" textLength="28.00" lengthAdjust="spacingAndGlyphs">2,710</text>
<text x="7.80" y="294.36" font-size="14" fill="#000000" stroke="#d3dfea" stroke-width="0.18" textLength="49.00" lengthAdjust="spacingAndGlyphs">25/07/15</text>
<text x="82.60" y="294.36" font-size="14" fill="#000000" stroke="#ffffff" stroke-width="0.18" textLength="28.00" lengthAdjust="spacingAndGlyphs">2,308</text>
<text x="132.60" y="294.36" font-size="14" fill="#000000" stroke="#ffffff" stroke-width="0.18" textLength="28.00" lengthAdjust="spacingAndGlyphs">2,431</text>
<text x="182.60" y="294.36" font-size="14" fill="#000000" stroke="#ffffff" stroke-width="0.18" textLength="28.00" lengthAdjust="spacingAndGlyphs">2,463</text>
<text x="232.60" y="294.36" font-size="14" fill="#000000" stroke="#ffffff" stroke-width="0.18" textLength="28.00" lengthAdjust="spacingAndGlyphs">2,644</text>
<text x="282.60" y="294.36" font-size="14" fill="#000000" stroke="#ffffff" stroke-width="0.18" textLength="28.00" lengthAdjust="spacingAndGlyphs">2,877</text>
<text x="332.60" y="294.36" font-size="14" fill="#000000" stroke="#ffffff" stroke-width="0.18" textLength="28.00" lengthAdjust="spacingAndGlyphs">2,846</text>
<text x="382.60" y="294.36" font-size="14" fill="#000000" stroke="#ffffff" stroke-width="0.18" textLength="28.00" lengthAdjust="spacingAndGlyphs">2,744</text>
<text x="432.60" y="294.36" font-size="14" fill="#000000" stroke="#ffffff" stroke-width="0.18" textLength="28.00" lengthAdjust="spacingAndGlyphs">2,642</text>
<text x="482.60" y="294.36" font-size="14" fill="#000000" stroke="#ffffff" stroke-width="0.18" textLength="28.00" lengthAdjust="spacingAndGlyphs">2,765</text>
<text x="532.60" y="294.36" font-size="14" fill="#000000" stroke="#ffffff" stroke-width="0.18" textLength="28.00" lengthAdjust="spacingAndGlyphs">2,426</text>
<text x="582.60" y="294.36" font-size="14" fill="#000000" stroke="#ffffff" stroke-width="0.18" textLength="28.00" lengthAdjust="spacingAndGlyphs">2,294</text>
<text x="632.60" y="294.36" font-size="14" fill="#000000" stroke="#ffffff" stroke-width="0.18" textLength="28.00" lengthAdjust="spacingAndGlyphs">2,416</text>
<text x="682.60" y="294.36" font-size="14" fill="#000000" stroke="#ffffff" stroke-width="0.18" textLength="28.00" lengthAdjust="spacingAndGlyphs">2,693</text>
<text x="732.60" y="294.36" font-size="14" fill="#000000" stroke="#ffffff" stroke-width="0.18" textLength="28.00" lengthAdjust="spacingAndGlyphs">2,483</text>
<text x="782.60" y="294.36" font-size="14" fill="#000000" stroke="#ffffff" stroke-width="0.18" textLength="28.00" lengthAdjust="spacingAndGlyphs">2,953</text>
<text x="838.10" y="294.36" font-size="14" fill="#000000" stroke="#ffffff" stroke-width="0.18" textLength="28.00" lengthAdjust="spacingAndGlyphs">8,782</text>
<text x="887.60" y="294.36" font-size="14" fill="#000000" stroke="#ffffff" stroke-width="0.18" textLength="28.00" lengthAdjust="spacingAndGlyphs">2,510</text>
<text x="937.60" y="294.36" font-size="14" fill="#000000" stroke="#ffffff" stroke-width="0.18" textLength="28.00" lengthAdjust="spacingAndGlyphs">2,710</text>
<rect x="969.00" y="5.00" width="4.00" height="305.50" fill="#fafbfc" />
<rect x="969.00" y="5.00" width="1.00" height="305.50" fill="#6f7e8f" />
<rect x="971.00" y="6.00" width="2.00" height="13.00" fill="#c3cfdc" />
<rect x="971.00" y="21.00" width="2.00" height="39.00" fill="#c3cfdc" />
<rect x="971.00" y="296.00" width="2.00" height="13.00" fill="#c3cfdc" />
<rect x="0.00" y="316.50" width="538.50" height="330.00" fill="#ffffff" />
<rect x="0.00" y="316.00" width="539.00" height="1.00" fill="#5f6f82" />
<rect x="538.00" y="316.00" width="1.00" height="330.50" fill="#5f6f82" />
<rect x="0.00" y="646.00" width="538.50" height="1.00" fill="#7d95b0" />
<rect x="26.00" y="317.00" width="1.00" height="312.00" fill="#e4e4e4" />
<rect x="58.00" y="317.00" width="1.00" height="312.00" fill="#e4e4e4" />
<rect x="107.00" y="317.00" width="1.00" height="312.00" fill="#e4e4e4" />
<rect x="180.00" y="317.00" width="1.00" height="312.00" fill="#e4e4e4" />
<rect x="205.00" y="317.00" width="1.00" height="312.00" fill="#e4e4e4" />
<rect x="254.00" y="317.00" width="1.00" height="312.00" fill="#e4e4e4" />
<rect x="335.00" y="317.00" width="1.00" height="312.00" fill="#e4e4e4" />
<rect x="367.00" y="317.00" width="1.00" height="312.00" fill="#e4e4e4" />
<rect x="416.00" y="317.00" width="1.00" height="312.00" fill="#e4e4e4" />
<line x1="0" y1="363.5" x2="490" y2="363.5" stroke="#dedede" stroke-width="1" stroke-dasharray="1 1"/>
<line x1="0" y1="395.5" x2="490" y2="395.5" stroke="#dedede" stroke-width="1" stroke-dasharray="1 1"/>
<line x1="0" y1="427.5" x2="490" y2="427.5" stroke="#dedede" stroke-width="1" stroke-dasharray="1 1"/>
<line x1="0" y1="459.5" x2="490" y2="459.5" stroke="#dedede" stroke-width="1" stroke-dasharray="1 1"/>
<line x1="0" y1="492.5" x2="490" y2="492.5" stroke="#dedede" stroke-width="1" stroke-dasharray="1 1"/>
<line x1="0" y1="524.5" x2="490" y2="524.5" stroke="#dedede" stroke-width="1" stroke-dasharray="1 1"/>
<line x1="0" y1="556.5" x2="490" y2="556.5" stroke="#dedede" stroke-width="1" stroke-dasharray="1 1"/>
<line x1="0" y1="588.5" x2="490" y2="588.5" stroke="#dedede" stroke-width="1" stroke-dasharray="1 1"/>
<line x1="0" y1="620.5" x2="490" y2="620.5" stroke="#dedede" stroke-width="1" stroke-dasharray="1 1"/>
<path transform="translate(4,321) scale(1.0,1.0)" d="M1,0.5H8.5V3.5 M0,4.5H10.5 M5.5,4.5V7.5 M1,7.5H8.5V10.5" fill="none" stroke="#0000ff" stroke-width="1.00"/>
<path transform="translate(16,321) scale(1.0,1.0)" d="M1,0.5H8.5V7.5 M3.5,4.5V9.5 M0,9.5H10" fill="none" stroke="#0000ff" stroke-width="1.00"/>
<text x="27.20" y="331.20" font-size="14" fill="#0000ff" stroke="#ffffff" stroke-width="0.18" textLength="13.00" lengthAdjust="spacingAndGlyphs">1Y</text>
<path transform="translate(46,321) scale(1.0,1.0)" d="M1,0.5H8.5V3.5 M0,4.5H10.5 M5.5,4.5V7.5 M1,7.5H8.5V10.5" fill="none" stroke="#0000ff" stroke-width="1.00"/>
<path transform="translate(58,321) scale(1.0,1.0)" d="M1,0.5H8.5V7.5 M3.5,4.5V9.5 M0,9.5H10" fill="none" stroke="#0000ff" stroke-width="1.00"/>
<text x="69.20" y="331.20" font-size="14" fill="#0000ff" stroke="#ffffff" stroke-width="0.18" textLength="13.00" lengthAdjust="spacingAndGlyphs">2Y</text>
<path transform="translate(88,321) scale(1.0,1.0)" d="M1,0.5H8.5V3.5 M0,4.5H10.5 M5.5,4.5V7.5 M1,7.5H8.5V10.5" fill="none" stroke="#e00000" stroke-width="1.00"/>
<path transform="translate(100,321) scale(1.0,1.0)" d="M1,0.5H8.5V7.5 M3.5,4.5V9.5 M0,9.5H10" fill="none" stroke="#e00000" stroke-width="1.00"/>
<text x="111.20" y="331.20" font-size="14" fill="#e00000" stroke="#ffffff" stroke-width="0.18" textLength="13.00" lengthAdjust="spacingAndGlyphs">3Y</text>
<path transform="translate(130,321) scale(1.0,1.0)" d="M2,0.5H5 M0,2.5H7 M2,3.8H5Q6.5,3.8 6.5,5.3Q6.5,6.8 5,6.8H2Q0.5,6.8 0.5,5.3Q0.5,3.8 2,3.8Z M9.5,0V8 M9.5,3.5H11.5 M2,8V10.5H10" fill="none" stroke="#8080ff" stroke-width="1.00"/>
<path transform="translate(142,321) scale(1.0,1.0)" d="M0.5,0.5H7.5 M4,1L0.5,6.5 M4,1L7,5.5 M6.5,2.5H9.5 M9.5,0V8 M1.5,8V10.5H9.5" fill="none" stroke="#8080ff" stroke-width="1.00"/>
<text x="153.20" y="331.20" font-size="14" fill="#8080ff" stroke="#ffffff" stroke-width="0.18" textLength="13.00" lengthAdjust="spacingAndGlyphs">3Y</text>
<path transform="translate(172,321) scale(1.0,1.0)" d="M2,0.5H5 M0,2.5H7.5 M2,4H5.5Q6.5,4 6.5,5.5Q6.5,7 5.5,7H2Q1,7 1,5.5Q1,4 2,4Z M3.75,7V9.5 M0,9.5H7.5 M8.5,0V11" fill="none" stroke="#66cc00" stroke-width="1.00"/>
<path transform="translate(184,321) scale(1.0,1.0)" d="M3.5,0V4.5L0.5,10 M3.5,4.5L6.5,10 M8.5,0V11 M8.5,5.5H11" fill="none" stroke="#66cc00" stroke-width="1.00"/>
<text x="195.20" y="331.20" font-size="14" fill="#66cc00" stroke="#ffffff" stroke-width="0.18" textLength="15.00" lengthAdjust="spacingAndGlyphs">AA</text>
<rect x="210.30" y="325.80" width="5.2" height="1.05" fill="#66cc00"/>
<rect x="490.00" y="317.00" width="1.00" height="312.00" fill="#707070" />
<rect x="0.00" y="628.00" width="538.00" height="1.00" fill="#707070" />
<rect x="490.00" y="363.00" width="4.00" height="1.00" fill="#707070" />
<rect x="490.00" y="379.00" width="2.00" height="1.00" fill="#707070" />
<text x="501.70" y="368.20" font-size="14" fill="#000000" stroke="#ffffff" stroke-width="0.18" textLength="28.00" lengthAdjust="spacingAndGlyphs">3,000</text>
<rect x="490.00" y="395.00" width="4.00" height="1.00" fill="#707070" />
<rect x="490.00" y="411.00" width="2.00" height="1.00" fill="#707070" />
<text x="501.70" y="400.32" font-size="14" fill="#000000" stroke="#ffffff" stroke-width="0.18" textLength="28.00" lengthAdjust="spacingAndGlyphs">2,900</text>
<rect x="490.00" y="427.00" width="4.00" height="1.00" fill="#707070" />
<rect x="490.00" y="443.00" width="2.00" height="1.00" fill="#707070" />
<text x="501.70" y="432.45" font-size="14" fill="#000000" stroke="#ffffff" stroke-width="0.18" textLength="28.00" lengthAdjust="spacingAndGlyphs">2,800</text>
<rect x="490.00" y="459.00" width="4.00" height="1.00" fill="#707070" />
<rect x="490.00" y="475.00" width="2.00" height="1.00" fill="#707070" />
<text x="501.70" y="464.57" font-size="14" fill="#000000" stroke="#ffffff" stroke-width="0.18" textLength="28.00" lengthAdjust="spacingAndGlyphs">2,700</text>
<rect x="490.00" y="492.00" width="4.00" height="1.00" fill="#707070" />
<rect x="490.00" y="508.00" width="2.00" height="1.00" fill="#707070" />
<text x="501.70" y="496.70" font-size="14" fill="#000000" stroke="#ffffff" stroke-width="0.18" textLength="28.00" lengthAdjust="spacingAndGlyphs">2,600</text>
<rect x="490.00" y="524.00" width="4.00" height="1.00" fill="#707070" />
<rect x="490.00" y="540.00" width="2.00" height="1.00" fill="#707070" />
<text x="501.70" y="528.83" font-size="14" fill="#000000" stroke="#ffffff" stroke-width="0.18" textLength="28.00" lengthAdjust="spacingAndGlyphs">2,500</text>
<rect x="490.00" y="556.00" width="4.00" height="1.00" fill="#707070" />
<rect x="490.00" y="572.00" width="2.00" height="1.00" fill="#707070" />
<text x="501.70" y="560.95" font-size="14" fill="#000000" stroke="#ffffff" stroke-width="0.18" textLength="28.00" lengthAdjust="spacingAndGlyphs">2,400</text>
<rect x="490.00" y="588.00" width="4.00" height="1.00" fill="#707070" />
<rect x="490.00" y="604.00" width="2.00" height="1.00" fill="#707070" />
<text x="501.70" y="593.08" font-size="14" fill="#000000" stroke="#ffffff" stroke-width="0.18" textLength="28.00" lengthAdjust="spacingAndGlyphs">2,300</text>
<rect x="490.00" y="620.00" width="4.00" height="1.00" fill="#707070" />
<text x="501.70" y="625.20" font-size="14" fill="#000000" stroke="#ffffff" stroke-width="0.18" textLength="28.00" lengthAdjust="spacingAndGlyphs">2,200</text>
<rect x="26.00" y="629.00" width="1.00" height="4.00" fill="#707070" />
<text x="27.00" y="642.00" font-size="14" fill="#000000" stroke="#ffffff" stroke-width="0.18" textLength="13.00" lengthAdjust="spacingAndGlyphs">05</text>
<rect x="58.00" y="629.00" width="1.00" height="2.00" fill="#707070" />
<text x="59.00" y="642.00" font-size="14" fill="#000000" stroke="#ffffff" stroke-width="0.18" textLength="31.00" lengthAdjust="spacingAndGlyphs">05/12</text>
<rect x="107.00" y="629.00" width="1.00" height="2.00" fill="#707070" />
<text x="108.00" y="642.00" font-size="14" fill="#000000" stroke="#ffffff" stroke-width="0.18" textLength="31.00" lengthAdjust="spacingAndGlyphs">05/20</text>
<rect x="180.00" y="629.00" width="1.00" height="4.00" fill="#707070" />
<text x="181.00" y="642.00" font-size="14" fill="#000000" stroke="#ffffff" stroke-width="0.18" textLength="13.00" lengthAdjust="spacingAndGlyphs">06</text>
<rect x="205.00" y="629.00" width="1.00" height="2.00" fill="#707070" />
<text x="206.00" y="642.00" font-size="14" fill="#000000" stroke="#ffffff" stroke-width="0.18" textLength="31.00" lengthAdjust="spacingAndGlyphs">06/09</text>
<rect x="254.00" y="629.00" width="1.00" height="2.00" fill="#707070" />
<text x="255.00" y="642.00" font-size="14" fill="#000000" stroke="#ffffff" stroke-width="0.18" textLength="31.00" lengthAdjust="spacingAndGlyphs">06/17</text>
<rect x="335.00" y="629.00" width="1.00" height="4.00" fill="#707070" />
<text x="336.00" y="642.00" font-size="14" fill="#000000" stroke="#ffffff" stroke-width="0.18" textLength="13.00" lengthAdjust="spacingAndGlyphs">07</text>
<rect x="367.00" y="629.00" width="1.00" height="2.00" fill="#707070" />
<text x="368.00" y="642.00" font-size="14" fill="#000000" stroke="#ffffff" stroke-width="0.18" textLength="31.00" lengthAdjust="spacingAndGlyphs">07/07</text>
<rect x="416.00" y="629.00" width="1.00" height="2.00" fill="#707070" />
<text x="417.00" y="642.00" font-size="14" fill="#000000" stroke="#ffffff" stroke-width="0.18" textLength="31.00" lengthAdjust="spacingAndGlyphs">07/15</text>
<text x="485.20" y="642.00" font-size="14" fill="#000000" stroke="#ffffff" stroke-width="0.18" textLength="31.00" lengthAdjust="spacingAndGlyphs">07/25</text>
<polyline points="10.27,394.10 18.38,406.10 26.50,404.10 34.62,413.20 42.73,406.10 50.84,392.50 58.96,392.50 67.08,383.40 75.19,388.50 83.31,385.40 91.42,397.40 99.53,384.50 107.65,393.20 115.77,389.40 123.88,390.30 132.00,389.40 140.11,387.40 148.23,391.00 156.34,398.40 164.46,391.50 172.57,390.40 180.69,390.40 188.80,369.40 196.91,372.40 205.03,376.40 213.15,378.40 221.26,372.40 229.38,372.40 237.49,363.50 245.61,358.40 253.72,368.40 261.84,363.40 269.95,362.40 278.06,364.60 286.18,357.40 294.30,369.30 302.41,369.30 310.53,373.30 318.64,374.40 326.75,375.50 334.87,376.50 342.99,369.30 351.10,379.50 359.22,374.50 367.33,372.40 375.44,373.30 383.56,374.40 391.68,386.40 399.79,383.50 407.91,376.40 416.02,378.60 424.13,379.56 432.25,373.78 440.37,376.03 448.48,380.20 456.60,378.92 464.71,379.56 472.82,376.35" fill="none" stroke="#66cc00" stroke-width="1.05" stroke-linejoin="miter"/>
<polyline points="10.27,485.10 18.38,497.20 26.50,494.20 34.62,502.80 42.73,511.40 50.84,497.20 58.96,497.20 67.08,480.60 75.19,483.30 83.31,480.60 91.42,491.40 99.53,477.50 107.65,486.10 115.77,481.50 123.88,482.20 132.00,480.80 140.11,479.40 148.23,482.60 156.34,488.60 164.46,480.60 172.57,477.50 180.69,476.40 188.80,458.30 196.91,460.40 205.03,463.20 213.15,464.60 221.26,456.70 229.38,453.50 237.49,445.80 245.61,438.50 253.72,447.90 261.84,442.60 269.95,441.40 278.06,444.40 286.18,435.40 294.30,447.20 302.41,448.60 310.53,451.40 318.64,451.40 326.75,452.40 334.87,452.40 342.99,444.40 351.10,455.30 359.22,451.40 367.33,450.40 375.44,452.40 383.56,453.50 391.68,467.40 399.79,466.25 407.91,459.30 416.02,462.12 424.13,463.41 432.25,457.95 440.37,460.52 448.48,465.01 456.60,464.37 464.71,465.66 472.82,463.09" fill="none" stroke="#7b7bff" stroke-width="1.05" stroke-linejoin="miter"/>
<polyline points="10.27,559.40 18.38,564.30 26.50,564.30 34.62,572.40 42.73,573.30 50.84,573.50 58.96,575.60 67.08,572.20 75.19,582.30 83.31,583.50 91.42,592.60 99.53,589.50 107.65,594.30 115.77,594.30 123.88,594.30 132.00,594.30 140.11,594.30 148.23,596.20 156.34,597.50 164.46,596.20 172.57,596.20 180.69,597.50 188.80,590.20 196.91,592.80 205.03,595.30 213.15,595.30 221.26,593.50 229.38,593.50 237.49,590.70 245.61,588.30 253.72,595.30 261.84,591.10 269.95,589.30 278.06,590.70 286.18,586.50 294.30,589.30 302.41,588.30 310.53,590.40 318.64,587.20 326.75,587.20 334.87,588.30 342.99,585.60 351.10,587.20 359.22,584.40 367.33,584.40 375.44,585.60 383.56,585.60 391.68,589.30 399.79,587.20 407.91,584.40 416.02,585.81 424.13,586.13 432.25,582.91 440.37,583.56 448.48,584.84 456.60,583.88 464.71,583.88 472.82,583.24" fill="none" stroke="#0000ff" stroke-width="1.05" stroke-linejoin="miter"/>
<polyline points="10.27,570.50 18.38,580.50 26.50,579.40 34.62,588.60 42.73,581.00 50.84,569.20 58.96,570.50 67.08,558.40 75.19,566.50 83.31,565.40 91.42,576.70 99.53,567.50 107.65,575.10 115.77,573.30 123.88,575.40 132.00,577.30 140.11,578.30 148.23,578.30 156.34,580.50 164.46,577.80 172.57,574.30 180.69,578.00 188.80,563.20 196.91,563.30 205.03,563.30 213.15,561.10 221.26,555.00 229.38,548.30 237.49,535.80 245.61,533.10 253.72,541.10 261.84,535.10 269.95,529.60 278.06,533.30 286.18,523.50 294.30,536.50 302.41,536.50 310.53,539.30 318.64,535.40 326.75,540.00 334.87,542.50 342.99,536.50 351.10,547.20 359.22,541.40 367.33,539.30 375.44,542.10 383.56,544.90 391.68,555.30 399.79,549.00 407.91,543.50 416.02,546.29 424.13,548.86 432.25,544.04 440.37,544.36 448.48,550.79 456.60,548.86 464.71,550.15 472.82,547.90" fill="none" stroke="#0000ff" stroke-width="1.05" stroke-linejoin="miter"/>
<polyline points="10.27,585.10 18.38,598.30 26.50,594.00 34.62,603.50 42.73,594.50 50.84,578.30 58.96,578.30 67.08,565.40 75.19,571.50 83.31,568.10 91.42,582.70 99.53,567.50 107.65,578.30 115.77,573.50 123.88,576.20 132.00,576.20 140.11,572.20 148.23,575.60 156.34,583.40 164.46,575.10 172.57,573.50 180.69,575.10 188.80,551.10 196.91,552.20 205.03,554.20 213.15,561.10 221.26,549.70 229.38,546.25 237.49,535.80 245.61,529.30 253.72,540.30 261.84,533.30 269.95,532.40 278.06,535.80 286.18,524.20 294.30,536.50 302.41,536.50 310.53,538.30 318.64,539.30 326.75,539.70 334.87,538.30 342.99,529.30 351.10,540.40 359.22,534.40 367.33,529.30 375.44,531.40 383.56,531.40 391.68,544.90 399.79,540.70 407.91,532.40 416.02,536.01 424.13,537.30 432.25,530.87 440.37,532.48 448.48,538.26 456.60,536.01 464.71,537.62 472.82,534.73" fill="none" stroke="#e00000" stroke-width="1.05" stroke-linejoin="miter"/>
<rect x="545.50" y="316.50" width="424.00" height="330.00" fill="#ffffff" />
<rect x="545.50" y="343.50" width="85.50" height="303.00" fill="#d3dfea" />
<rect x="545.50" y="316.50" width="424.00" height="27.00" fill="#2b6bb4" />
<rect x="545.00" y="316.00" width="1.00" height="330.50" fill="#5f6f82" />
<rect x="545.00" y="316.00" width="425.00" height="1.00" fill="#5f6f82" />
<rect x="630.50" y="317.00" width="1.00" height="27.00" fill="#4a86c6" />
<rect x="716.00" y="317.00" width="1.00" height="27.00" fill="#4a86c6" />
<rect x="801.00" y="317.00" width="1.00" height="27.00" fill="#4a86c6" />
<rect x="885.00" y="317.00" width="1.00" height="27.00" fill="#4a86c6" />
<rect x="545.50" y="343.00" width="424.00" height="1.00" fill="#a9bccf" />
<rect x="545.50" y="370.27" width="424.00" height="1.00" fill="#a9bccf" />
<rect x="545.50" y="397.54" width="424.00" height="1.00" fill="#a9bccf" />
<rect x="545.50" y="424.81" width="424.00" height="1.00" fill="#a9bccf" />
<rect x="545.50" y="452.08" width="424.00" height="1.00" fill="#a9bccf" />
<rect x="545.50" y="479.35" width="424.00" height="1.00" fill="#a9bccf" />
<rect x="545.50" y="506.62" width="424.00" height="1.00" fill="#a9bccf" />
<rect x="545.50" y="533.89" width="424.00" height="1.00" fill="#a9bccf" />
<rect x="545.50" y="561.16" width="424.00" height="1.00" fill="#a9bccf" />
<rect x="545.50" y="588.43" width="424.00" height="1.00" fill="#a9bccf" />
<rect x="545.50" y="615.70" width="424.00" height="1.00" fill="#a9bccf" />
<rect x="545.50" y="642.97" width="424.00" height="1.00" fill="#a9bccf" />
<rect x="630.50" y="343.50" width="1.00" height="303.00" fill="#a9bccf" />
<rect x="716.00" y="343.50" width="1.00" height="303.00" fill="#a9bccf" />
<rect x="801.00" y="343.50" width="1.00" height="303.00" fill="#a9bccf" />
<rect x="885.00" y="343.50" width="1.00" height="303.00" fill="#a9bccf" />
<rect x="969.00" y="343.50" width="1.00" height="303.00" fill="#a9bccf" />
<rect x="545.00" y="646.00" width="428.00" height="1.00" fill="#5f6f82" />
<path d="M625,342 L630,342 L630,337 Z" fill="#ffffff"/>
<path transform="translate(563,325) scale(1.0,1.0)" d="M1,0.5H8.5V3.5 M0,4.5H10.5 M5.5,4.5V7.5 M1,7.5H8.5V10.5" fill="none" stroke="#ffffff" stroke-width="1.00"/>
<path transform="translate(575,325) scale(1.0,1.0)" d="M1,0.5H8.5V7.5 M3.5,4.5V9.5 M0,9.5H10" fill="none" stroke="#ffffff" stroke-width="1.00"/>
<text x="586.20" y="335.00" font-size="14" fill="#ffffff" stroke="#2b6bb4" stroke-width="0.18" textLength="13.00" lengthAdjust="spacingAndGlyphs">5Y</text>
<text x="649.20" y="335.00" font-size="14" fill="#ffffff" stroke="#2b6bb4" stroke-width="0.18" textLength="13.00" lengthAdjust="spacingAndGlyphs">11</text>
<path transform="translate(662,325) scale(1.0,1.0)" d="M3.5,0V4L0.5,10 M3.5,4L6.5,10 M8.5,0V11" fill="none" stroke="#ffffff" stroke-width="1.00"/>
<text x="673.20" y="335.00" font-size="14" fill="#ffffff" stroke="#2b6bb4" stroke-width="0.18" textLength="13.00" lengthAdjust="spacingAndGlyphs">30</text>
<path transform="translate(686,325) scale(1.0,1.0)" d="M1.5,0V4.5 M8.5,0V4.5 M1.5,2.5H8.5 M1.5,4.5H8.5 M0,6.5H10 M5.5,6.5V8 M1.5,8V10.5H9.5" fill="none" stroke="#ffffff" stroke-width="1.00"/>
<text x="734.20" y="335.00" font-size="14" fill="#ffffff" stroke="#2b6bb4" stroke-width="0.18" textLength="13.00" lengthAdjust="spacingAndGlyphs">16</text>
<path transform="translate(747,325) scale(1.0,1.0)" d="M3.5,0V4L0.5,10 M3.5,4L6.5,10 M8.5,0V11" fill="none" stroke="#ffffff" stroke-width="1.00"/>
<text x="758.20" y="335.00" font-size="14" fill="#ffffff" stroke="#2b6bb4" stroke-width="0.18" textLength="13.00" lengthAdjust="spacingAndGlyphs">00</text>
<path transform="translate(771,325) scale(1.0,1.0)" d="M1.5,0V4.5 M8.5,0V4.5 M1.5,2.5H8.5 M1.5,4.5H8.5 M0,6.5H10 M5.5,6.5V8 M1.5,8V10.5H9.5" fill="none" stroke="#ffffff" stroke-width="1.00"/>
<path transform="translate(832,325) scale(1.0,1.0)" d="M0.5,0.5H7.5 M4,1L0.5,6.5 M4,1L7,5.5 M6.5,2.5H9.5 M9.5,0V8 M1.5,8V10.5H9.5" fill="none" stroke="#ffffff" stroke-width="1.00"/>
<path transform="translate(844,325) scale(1.0,1.0)" d="M1,0.5H5.5Q5.5,6 0.5,10 M8.5,0V11" fill="none" stroke="#ffffff" stroke-width="1.00"/>
<path transform="translate(904,325) scale(1.0,1.0)" d="M0.5,0.5H7.5 M4,1L0.5,6.5 M4,1L7,5.5 M6.5,2.5H9.5 M9.5,0V8 M1.5,8V10.5H9.5" fill="none" stroke="#ffffff" stroke-width="1.00"/>
<path transform="translate(916,325) scale(1.0,1.0)" d="M1,0.5H5.5Q5.5,6 0.5,10 M8.5,0V11" fill="none" stroke="#ffffff" stroke-width="1.00"/>
<path transform="translate(928,325) scale(1.0,1.0)" d="M4,0.5H0.5V9.5H4 M6.5,0V11 M6.5,5.5H9.5 M9.5,0V11" fill="none" stroke="#ffffff" stroke-width="1.00"/>
<path transform="translate(940,325) scale(1.0,1.0)" d="M0.5,0V10.5 M4.5,0V10.5 M0.5,5.5H4.5 M0.5,10.5H4.5 M8.5,0V11" fill="none" stroke="#ffffff" stroke-width="1.00"/>
<text x="564.20" y="361.10" font-size="14" fill="#000000" stroke="#d3dfea" stroke-width="0.18" textLength="49.00" lengthAdjust="spacingAndGlyphs">25/07/24</text>
<text x="680.50" y="361.10" font-size="14" fill="#000000" stroke="#ffffff" stroke-width="0.18" textLength="28.00" lengthAdjust="spacingAndGlyphs">2,621</text>
<text x="765.50" y="361.10" font-size="14" fill="#000000" stroke="#ffffff" stroke-width="0.18" textLength="28.00" lengthAdjust="spacingAndGlyphs">2,626</text>
<text x="849.50" y="361.10" font-size="14" fill="#000000" stroke="#ffffff" stroke-width="0.18" textLength="28.00" lengthAdjust="spacingAndGlyphs">2,615</text>
<text x="936.70" y="361.10" font-size="14" fill="#dd0000" stroke="#ffffff" stroke-width="0.18" textLength="28.00" lengthAdjust="spacingAndGlyphs">0,011</text>
<text x="564.20" y="388.37" font-size="14" fill="#000000" stroke="#d3dfea" stroke-width="0.18" textLength="49.00" lengthAdjust="spacingAndGlyphs">25/07/23</text>
<text x="680.50" y="388.37" font-size="14" fill="#000000" stroke="#ffffff" stroke-width="0.18" textLength="28.00" lengthAdjust="spacingAndGlyphs">2,609</text>
<text x="765.50" y="388.37" font-size="14" fill="#000000" stroke="#ffffff" stroke-width="0.18" textLength="28.00" lengthAdjust="spacingAndGlyphs">2,615</text>
<text x="849.50" y="388.37" font-size="14" fill="#000000" stroke="#ffffff" stroke-width="0.18" textLength="28.00" lengthAdjust="spacingAndGlyphs">2,622</text>
<rect x="931.80" y="382.97" width="5.2" height="1.05" fill="#0000cc"/>
<text x="936.70" y="388.37" font-size="14" fill="#0000cc" stroke="#ffffff" stroke-width="0.18" textLength="28.00" lengthAdjust="spacingAndGlyphs">0,007</text>
<text x="564.20" y="415.64" font-size="14" fill="#000000" stroke="#d3dfea" stroke-width="0.18" textLength="49.00" lengthAdjust="spacingAndGlyphs">25/07/22</text>
<text x="680.50" y="415.64" font-size="14" fill="#000000" stroke="#ffffff" stroke-width="0.18" textLength="28.00" lengthAdjust="spacingAndGlyphs">2,612</text>
<text x="765.50" y="415.64" font-size="14" fill="#000000" stroke="#ffffff" stroke-width="0.18" textLength="28.00" lengthAdjust="spacingAndGlyphs">2,622</text>
<text x="849.50" y="415.64" font-size="14" fill="#000000" stroke="#ffffff" stroke-width="0.18" textLength="28.00" lengthAdjust="spacingAndGlyphs">2,628</text>
<rect x="931.80" y="410.24" width="5.2" height="1.05" fill="#0000cc"/>
<text x="936.70" y="415.64" font-size="14" fill="#0000cc" stroke="#ffffff" stroke-width="0.18" textLength="28.00" lengthAdjust="spacingAndGlyphs">0,006</text>
<text x="564.20" y="442.91" font-size="14" fill="#000000" stroke="#d3dfea" stroke-width="0.18" textLength="49.00" lengthAdjust="spacingAndGlyphs">25/07/21</text>
<text x="680.50" y="442.91" font-size="14" fill="#000000" stroke="#ffffff" stroke-width="0.18" textLength="28.00" lengthAdjust="spacingAndGlyphs">2,642</text>
<text x="765.50" y="442.91" font-size="14" fill="#000000" stroke="#ffffff" stroke-width="0.18" textLength="28.00" lengthAdjust="spacingAndGlyphs">2,628</text>
<text x="849.50" y="442.91" font-size="14" fill="#000000" stroke="#ffffff" stroke-width="0.18" textLength="28.00" lengthAdjust="spacingAndGlyphs">2,645</text>
<rect x="931.80" y="437.51" width="5.2" height="1.05" fill="#0000cc"/>
<text x="936.70" y="442.91" font-size="14" fill="#0000cc" stroke="#ffffff" stroke-width="0.18" textLength="28.00" lengthAdjust="spacingAndGlyphs">0,017</text>
<text x="564.20" y="470.18" font-size="14" fill="#000000" stroke="#d3dfea" stroke-width="0.18" textLength="49.00" lengthAdjust="spacingAndGlyphs">25/07/18</text>
<text x="680.50" y="470.18" font-size="14" fill="#000000" stroke="#ffffff" stroke-width="0.18" textLength="28.00" lengthAdjust="spacingAndGlyphs">2,654</text>
<text x="765.50" y="470.18" font-size="14" fill="#000000" stroke="#ffffff" stroke-width="0.18" textLength="28.00" lengthAdjust="spacingAndGlyphs">2,645</text>
<text x="849.50" y="470.18" font-size="14" fill="#000000" stroke="#ffffff" stroke-width="0.18" textLength="28.00" lengthAdjust="spacingAndGlyphs">2,663</text>
<rect x="931.80" y="464.78" width="5.2" height="1.05" fill="#0000cc"/>
<text x="936.70" y="470.18" font-size="14" fill="#0000cc" stroke="#ffffff" stroke-width="0.18" textLength="28.00" lengthAdjust="spacingAndGlyphs">0,018</text>
<text x="564.20" y="497.45" font-size="14" fill="#000000" stroke="#d3dfea" stroke-width="0.18" textLength="49.00" lengthAdjust="spacingAndGlyphs">25/07/17</text>
<text x="680.50" y="497.45" font-size="14" fill="#000000" stroke="#ffffff" stroke-width="0.18" textLength="28.00" lengthAdjust="spacingAndGlyphs">2,639</text>
<text x="765.50" y="497.45" font-size="14" fill="#000000" stroke="#ffffff" stroke-width="0.18" textLength="28.00" lengthAdjust="spacingAndGlyphs">2,663</text>
<text x="849.50" y="497.45" font-size="14" fill="#000000" stroke="#ffffff" stroke-width="0.18" textLength="28.00" lengthAdjust="spacingAndGlyphs">2,642</text>
<text x="936.70" y="497.45" font-size="14" fill="#dd0000" stroke="#ffffff" stroke-width="0.18" textLength="28.00" lengthAdjust="spacingAndGlyphs">0,021</text>
<text x="564.20" y="524.72" font-size="14" fill="#000000" stroke="#d3dfea" stroke-width="0.18" textLength="49.00" lengthAdjust="spacingAndGlyphs">25/07/16</text>
<text x="680.50" y="524.72" font-size="14" fill="#000000" stroke="#ffffff" stroke-width="0.18" textLength="28.00" lengthAdjust="spacingAndGlyphs">2,667</text>
<text x="765.50" y="524.72" font-size="14" fill="#000000" stroke="#ffffff" stroke-width="0.18" textLength="28.00" lengthAdjust="spacingAndGlyphs">2,642</text>
<text x="849.50" y="524.72" font-size="14" fill="#000000" stroke="#ffffff" stroke-width="0.18" textLength="28.00" lengthAdjust="spacingAndGlyphs">2,644</text>
<rect x="931.80" y="519.32" width="5.2" height="1.05" fill="#0000cc"/>
<text x="936.70" y="524.72" font-size="14" fill="#0000cc" stroke="#ffffff" stroke-width="0.18" textLength="28.00" lengthAdjust="spacingAndGlyphs">0,002</text>
<text x="564.20" y="551.99" font-size="14" fill="#000000" stroke="#d3dfea" stroke-width="0.18" textLength="49.00" lengthAdjust="spacingAndGlyphs">25/07/15</text>
<text x="680.50" y="551.99" font-size="14" fill="#000000" stroke="#ffffff" stroke-width="0.18" textLength="28.00" lengthAdjust="spacingAndGlyphs">2,661</text>
<text x="765.50" y="551.99" font-size="14" fill="#000000" stroke="#ffffff" stroke-width="0.18" textLength="28.00" lengthAdjust="spacingAndGlyphs">2,644</text>
<text x="849.50" y="551.99" font-size="14" fill="#000000" stroke="#ffffff" stroke-width="0.18" textLength="28.00" lengthAdjust="spacingAndGlyphs">2,652</text>
<rect x="931.80" y="546.59" width="5.2" height="1.05" fill="#0000cc"/>
<text x="936.70" y="551.99" font-size="14" fill="#0000cc" stroke="#ffffff" stroke-width="0.18" textLength="28.00" lengthAdjust="spacingAndGlyphs">0,008</text>
<text x="564.20" y="579.26" font-size="14" fill="#000000" stroke="#d3dfea" stroke-width="0.18" textLength="49.00" lengthAdjust="spacingAndGlyphs">25/07/14</text>
<text x="680.50" y="579.26" font-size="14" fill="#000000" stroke="#ffffff" stroke-width="0.18" textLength="28.00" lengthAdjust="spacingAndGlyphs">2,626</text>
<text x="765.50" y="579.26" font-size="14" fill="#000000" stroke="#ffffff" stroke-width="0.18" textLength="28.00" lengthAdjust="spacingAndGlyphs">2,652</text>
<text x="849.50" y="579.26" font-size="14" fill="#000000" stroke="#ffffff" stroke-width="0.18" textLength="28.00" lengthAdjust="spacingAndGlyphs">2,604</text>
<text x="936.70" y="579.26" font-size="14" fill="#dd0000" stroke="#ffffff" stroke-width="0.18" textLength="28.00" lengthAdjust="spacingAndGlyphs">0,048</text>
<text x="564.20" y="606.53" font-size="14" fill="#000000" stroke="#d3dfea" stroke-width="0.18" textLength="49.00" lengthAdjust="spacingAndGlyphs">25/07/11</text>
<text x="680.50" y="606.53" font-size="14" fill="#000000" stroke="#ffffff" stroke-width="0.18" textLength="28.00" lengthAdjust="spacingAndGlyphs">2,590</text>
<text x="765.50" y="606.53" font-size="14" fill="#000000" stroke="#ffffff" stroke-width="0.18" textLength="28.00" lengthAdjust="spacingAndGlyphs">2,604</text>
<text x="849.50" y="606.53" font-size="14" fill="#000000" stroke="#ffffff" stroke-width="0.18" textLength="28.00" lengthAdjust="spacingAndGlyphs">2,592</text>
<text x="936.70" y="606.53" font-size="14" fill="#dd0000" stroke="#ffffff" stroke-width="0.18" textLength="28.00" lengthAdjust="spacingAndGlyphs">0,012</text>
<text x="564.20" y="633.80" font-size="14" fill="#000000" stroke="#d3dfea" stroke-width="0.18" textLength="49.00" lengthAdjust="spacingAndGlyphs">25/07/10</text>
<text x="680.50" y="633.80" font-size="14" fill="#000000" stroke="#ffffff" stroke-width="0.18" textLength="28.00" lengthAdjust="spacingAndGlyphs">2,609</text>
<text x="765.50" y="633.80" font-size="14" fill="#000000" stroke="#ffffff" stroke-width="0.18" textLength="28.00" lengthAdjust="spacingAndGlyphs">2,592</text>
<text x="849.50" y="633.80" font-size="14" fill="#000000" stroke="#ffffff" stroke-width="0.18" textLength="28.00" lengthAdjust="spacingAndGlyphs">2,636</text>
<rect x="931.80" y="628.40" width="5.2" height="1.05" fill="#0000cc"/>
<text x="936.70" y="633.80" font-size="14" fill="#0000cc" stroke="#ffffff" stroke-width="0.18" textLength="28.00" lengthAdjust="spacingAndGlyphs">0,044</text>
<rect x="969.00" y="316.50" width="4.00" height="329.50" fill="#fafbfc" />
<rect x="969.00" y="316.50" width="1.00" height="329.50" fill="#6f7e8f" />
<rect x="971.00" y="317.00" width="2.00" height="13.00" fill="#c3cfdc" />
<rect x="971.00" y="332.00" width="2.00" height="45.00" fill="#c3cfdc" />
<rect x="971.00" y="632.00" width="2.00" height="13.00" fill="#c3cfdc" />
</svg>
</body></html>
